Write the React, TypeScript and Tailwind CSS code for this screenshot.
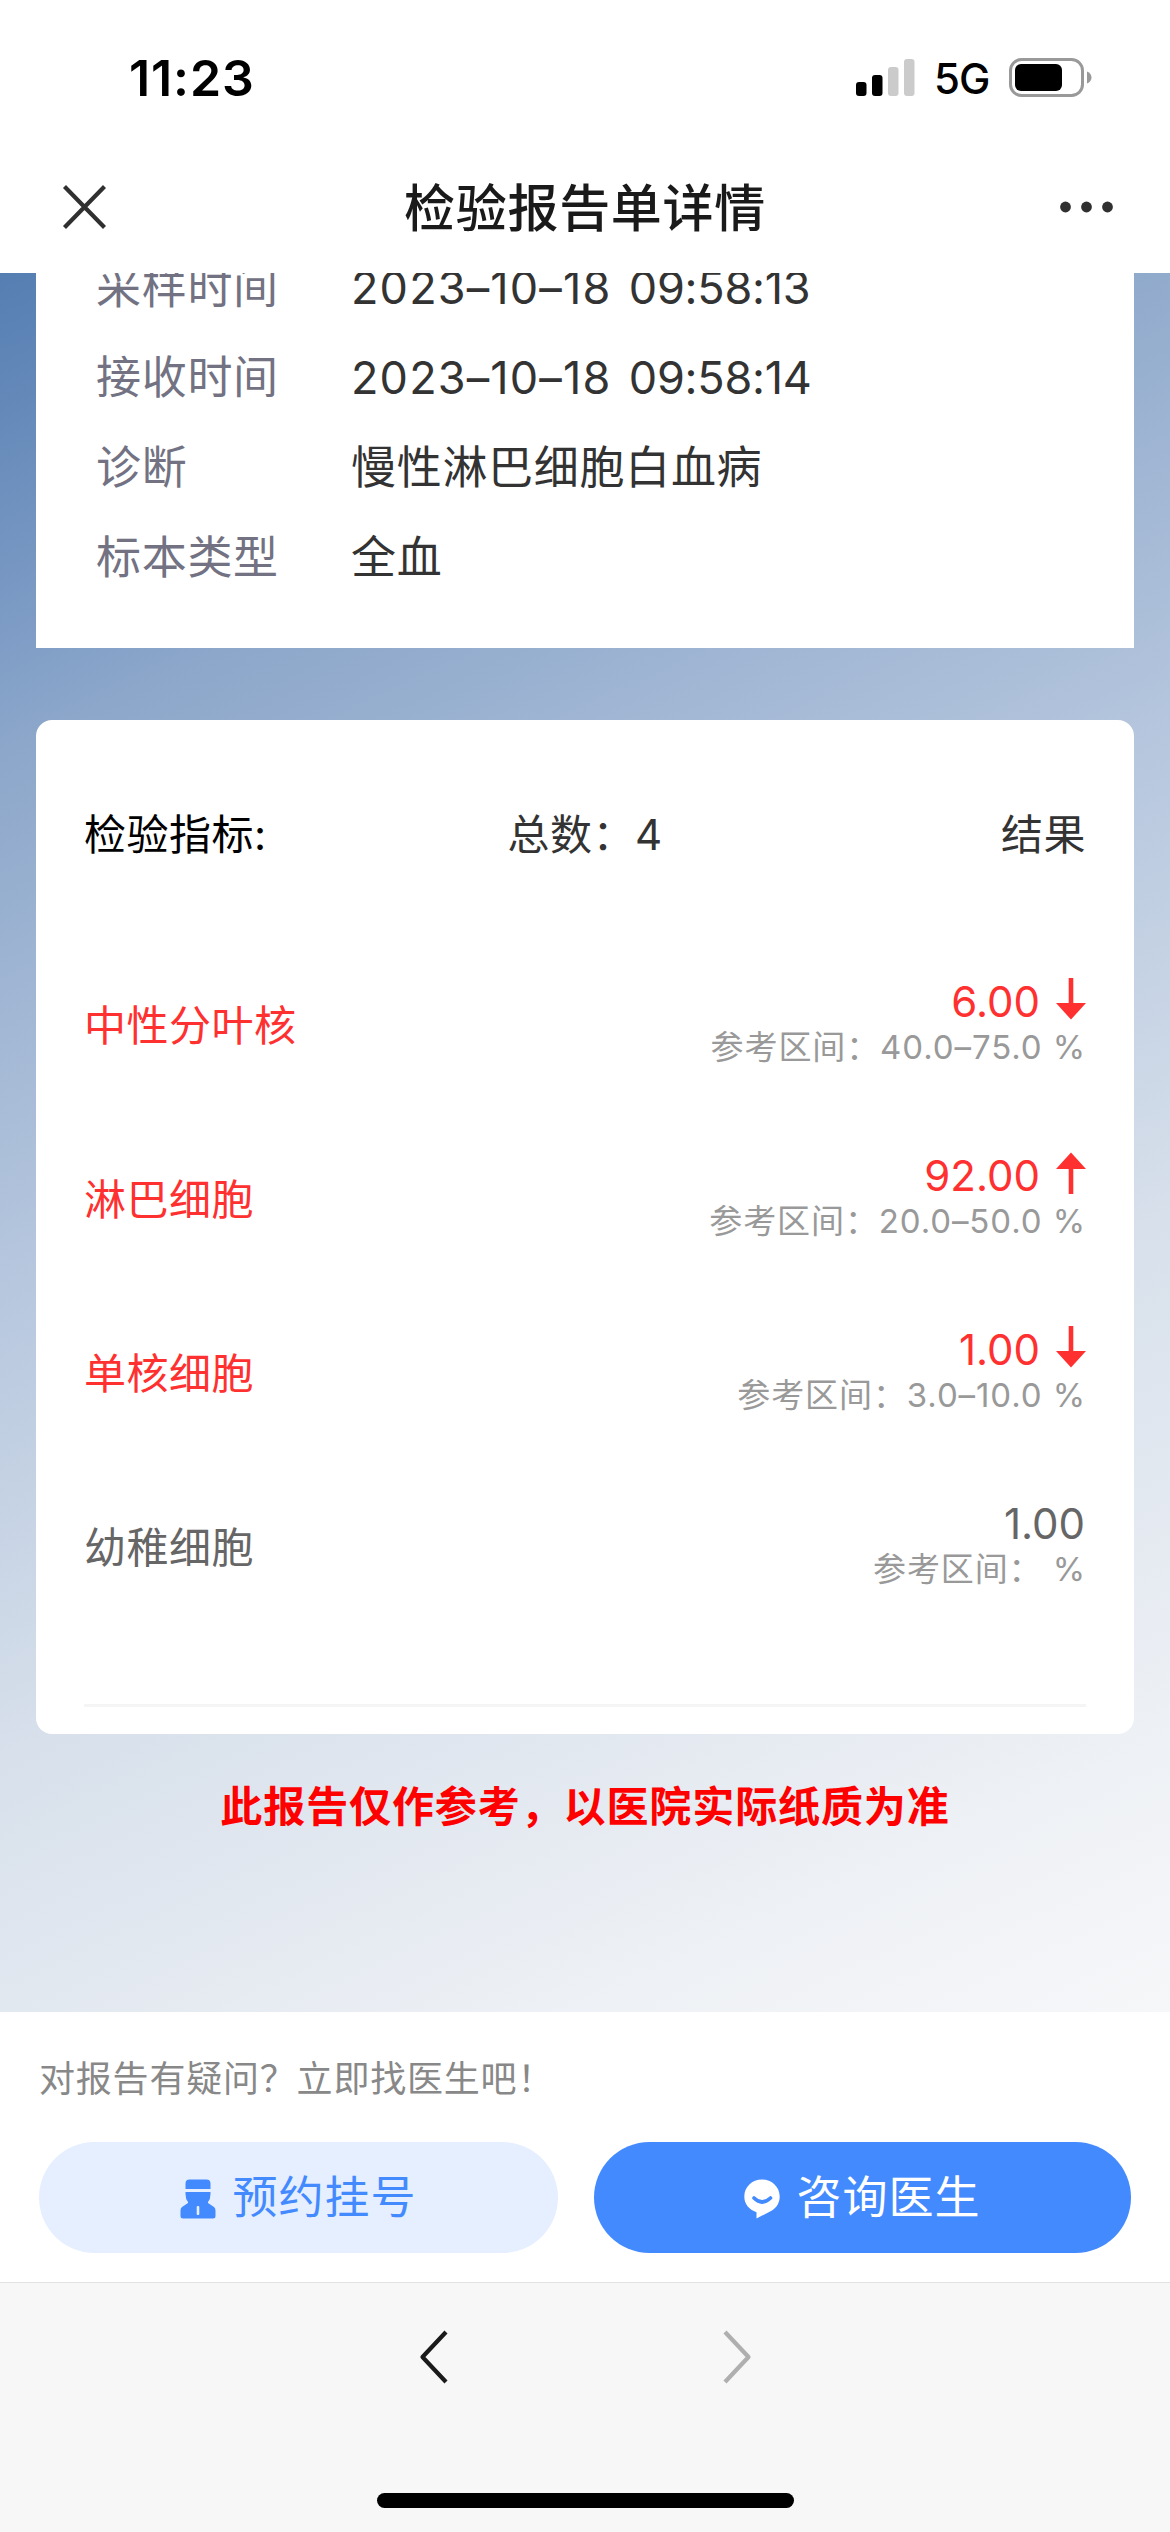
import React from "react";

type Trend = "up" | "down" | null;

const info: { label: string; value?: string; date?: string; time?: string }[] = [
  { label: "采样时间", date: "2023–10–18", time: "09:58:13" },
  { label: "接收时间", date: "2023–10–18", time: "09:58:14" },
  { label: "诊断", value: "慢性淋巴细胞白血病" },
  { label: "标本类型", value: "全血" },
];

const results: { name: string; value: string; range: string; trend: Trend }[] = [
  { name: "中性分叶核", value: "6.00", range: "40.0–75.0", trend: "down" },
  { name: "淋巴细胞", value: "92.00", range: "20.0–50.0", trend: "up" },
  { name: "单核细胞", value: "1.00", range: "3.0–10.0", trend: "down" },
  { name: "幼稚细胞", value: "1.00", range: "", trend: null },
];

function StatusBar() {
  return (
    <div className="flex h-[150px] items-start justify-between pt-[48px] pr-[78px] pl-[129px]">
      <div className="text-[50px] leading-[60px] font-semibold tracking-[0.900px] text-black">11:23</div>
      <div className="flex h-[60px] items-center">
        <svg width="60" height="40" viewBox="0 0 60 40" className="mr-[18px]">
          <rect x="0" y="24" width="10.5" height="14" rx="3" fill="#000" />
          <rect x="16" y="17" width="10.5" height="21" rx="3" fill="#000" />
          <rect x="32" y="9" width="10.5" height="29" rx="3" fill="#cbcbcb" />
          <rect x="48" y="1" width="10.5" height="37" rx="3" fill="#cbcbcb" />
        </svg>
        <span className="mt-[2px] w-[75px] text-[42px] leading-[60px] font-medium tracking-[-0.9px] text-black">5G</span>
        <svg width="83" height="40" viewBox="0 0 83 40">
          <rect x="1.5" y="1.5" width="72" height="36" rx="11" fill="none" stroke="#999" strokeWidth="3" />
          <rect x="6" y="6" width="47" height="27" rx="6" fill="#000" />
          <path d="M78 13.5c3 1 4.500 3.500 4.500 6s-1.500 5-4.500 6z" fill="#999" />
        </svg>
      </div>
    </div>
  );
}

function NavBar() {
  return (
    <div className="flex h-[123px] items-center justify-between px-[57px] pb-[9px]">
      <svg width="56" height="56" viewBox="0 0 56 56" fill="none" stroke="#303030" strokeWidth="4.200">
        <path d="M7.500 7.500l40 41M47.500 7.500l-40 41" />
      </svg>
      <h1 className="mt-[3px] text-[51px] leading-[60px] font-medium tracking-[0.700px] text-[#1a1a1a]">检验报告单详情</h1>
      <svg width="56" height="56" viewBox="0 0 56 56" fill="#303030">
        <circle cx="8.500" cy="28" r="5.400" />
        <circle cx="29.500" cy="28" r="5.400" />
        <circle cx="50.500" cy="28" r="5.400" />
      </svg>
    </div>
  );
}

function Arrow({ up }: { up: boolean }) {
  return (
    <svg width="30" height="42" viewBox="0 0 30 42" fill="#ff3030" className={up ? "mb-[6px] rotate-180" : "mb-[6px]"}>
      <path d="M12.700 0h4.600v25H30L15 41.500 0 25h12.700z" />
    </svg>
  );
}

export default function App() {
  return (
    <div
      lang="zh-CN"
      className="flex h-[2532px] w-[1170px] flex-col overflow-hidden bg-white font-['Inter','Noto_Sans_CJK_SC',sans-serif] whitespace-nowrap"
    >
      <header className="h-[273px] shrink-0 bg-white">
        <StatusBar />
        <NavBar />
      </header>

      <main className="h-[1739px] shrink-0 overflow-hidden bg-[linear-gradient(155deg,#557eb2_0%,#7f9dc6_16.4%,#8ca7ca_21%,#b4c5dd_43%,#d7e0eb_65%,#e2e8f0_76%,#eef1f5_88%,#f6f7f9_100%)] px-[36px]">
        <section className="flex h-[375px] flex-col justify-end bg-white pb-[45px]">
          {info.map((row) => (
            <div key={row.label} className="flex h-[90px] shrink-0 items-center text-[45px] leading-[60px] tracking-[0.700px]">
              <span className="w-[255px] shrink-0 pl-[60px] text-[#727283]">{row.label}</span>
              {row.date ? (
                <span className="pl-[60px] text-[#333] [font-feature-settings:'calt'_0]">
                  <span className="tracking-[1.150px]">{row.date}</span>
                  <span className="[word-spacing:4px]"> </span>
                  <span className="tracking-[-0.250px]">{row.time}</span>
                </span>
              ) : (
                <span className="pl-[60px] text-[#333]">{row.value}</span>
              )}
            </div>
          ))}
        </section>

        <section className="mt-[72px] h-[1014px] rounded-[16px] bg-white px-[48px]">
          <div className="flex h-[218px] items-center justify-between pt-[12px] text-[42px] leading-[60px] tracking-[0.500px] text-[#333]">
            <span className="w-[300px] text-black">检验指标:</span>
            <span>总数：4</span>
            <span className="w-[300px] text-right">结果</span>
          </div>
          {results.map((r) => (
            <div key={r.name} className="flex h-[174px] items-center justify-between">
              <span className={`pt-[2px] text-[42px] leading-[60px] tracking-[0.500px] ${r.trend ? "text-[#ff3030]" : "text-[#666]"}`}>
                {r.name}
              </span>
              <div className="flex flex-col items-end">
                <div className={`flex h-[48px] items-center text-[42px] leading-[48px] ${r.trend ? "text-[#ff3030]" : "text-[#666]"}`}>
                  <span className={r.trend ? "mr-[16px]" : "mr-[1px]"}>{r.value}</span>
                  {r.trend && <Arrow up={r.trend === "up"} />}
                </div>
                <div className="h-[46px] text-[33px] leading-[43px] tracking-[0.900px] whitespace-pre text-[#999]">
                  {`参考区间：${r.range} %`}
                </div>
              </div>
            </div>
          ))}
          <div className="mt-[70px] h-[3px] bg-[#f5f5f5]" />
        </section>

        <p className="mt-[43px] text-center text-[42px] leading-[60px] font-semibold tracking-[0.900px] text-[#ff0000]">
          此报告仅作参考，以医院实际纸质为准
        </p>
      </main>

      <section className="h-[270px] shrink-0 bg-white px-[39px] pt-[37px]">
        <p className="text-[36px] leading-[60px] tracking-[0.800px] text-[#888]">对报告有疑问？立即找医生吧！</p>
        <div className="mt-[33px] flex gap-[36px]">
          <button className="flex h-[111px] w-[519px] items-center justify-center gap-[16px] rounded-full bg-[#e6efff] text-[45px] tracking-[1px] text-[#448aff]">
            <svg width="36" height="40" viewBox="0 0 36 40" fill="#448aff" className="mt-[3px]">
              <path d="M5.500 10V4.500q0-4 4-4h17q4 0 4 4V10zM5.500 13h25v2q0 5-2.500 8v1l6 4q1.500 1.300 1.500 3.500V37q0 2.500-2.500 2.500H3Q.5 39.500.5 37v-5.500Q.5 29.300 2 28l6-4v-1q-2.500-3-2.500-8z" />
              <rect x="16.700" y="27" width="2.600" height="9" rx="1" fill="#e6efff" />
            </svg>
            <span className="leading-[60px]">预约挂号</span>
          </button>
          <button className="flex h-[111px] w-[537px] items-center justify-center gap-[16px] rounded-full bg-[#448aff] text-[45px] tracking-[1px] text-white">
            <svg width="36" height="40" viewBox="0 0 36 40" fill="#fff" className="mt-[3px]">
              <path d="M18 .5c10 0 17.700 7.500 17.700 17 0 6-2.800 11-8.200 14.200L12.500 39.500v-6.200C5 30.500.3 25 .3 17.500.3 8 8 .5 18 .5z" />
              <path d="M10 19q8 8 16.500 0" fill="none" stroke="#448aff" strokeWidth="3.600" strokeLinecap="round" />
            </svg>
            <span className="leading-[60px]">咨询医生</span>
          </button>
        </div>
      </section>

      <footer className="flex h-[250px] shrink-0 flex-col items-center justify-between border-t border-[#e2e2e2] bg-[#f7f7f7] pt-[47px] pb-[24px]">
        <div className="flex gap-[275px]">
          <svg width="29" height="54" viewBox="0 0 29 54" fill="none" stroke="#1a1a1a" strokeWidth="4.200" strokeLinejoin="round">
            <path d="M27 2L3.500 27 27 52" />
          </svg>
          <svg width="29" height="54" viewBox="0 0 29 54" fill="none" stroke="#afafaf" strokeWidth="4.200" strokeLinejoin="round">
            <path d="M2 2l23.500 25L2 52" />
          </svg>
        </div>
        <div className="h-[15px] w-[417px] rounded-full bg-black" />
      </footer>
    </div>
  );
}
